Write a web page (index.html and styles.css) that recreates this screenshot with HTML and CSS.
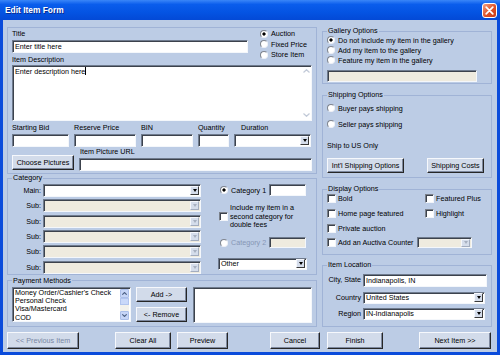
FILE: index.html
```html
<!DOCTYPE html>
<html lang="en">
<head>
    <meta charset="UTF-8">
    <title>Edit Item Form</title>
    <link rel="stylesheet" href="styles.css">
</head>
<body>
<div class="window">
    <div class="titlebar">
        <span class="caption">Edit Item Form</span>
        <span class="close-btn">
            <svg width="9" height="9" viewBox="0 0 9 9"><path d="M1.2 1.2L7.8 7.8M7.8 1.2L1.2 7.8" stroke="#fff" stroke-width="1.7" stroke-linecap="round"/></svg>
        </span>
    </div>
    <div class="client">
        <div class="columns">
            <div class="col-left">
                <div class="item-panel">
                    <div class="title-row">
                        <div class="title-field">
                            <span class="lbl">Title</span>
                            <div class="textbox">Enter title here</div>
                        </div>
                        <div class="type-group">
                            <div class="opt"><span class="radio checked"></span>Auction</div>
                            <div class="opt"><span class="radio"></span>Fixed Price</div>
                            <div class="opt"><span class="radio"></span>Store Item</div>
                        </div>
                    </div>
                    <span class="lbl">Item Description</span>
                    <div class="textarea">
                        <div class="ta-text">Enter description here<span class="caret"></span></div>
                        <div class="vscroll off">
                            <svg width="7" height="4" viewBox="0 0 7 4"><path d="M0.5 3.5L3.5 0.7L6.5 3.5" fill="none" stroke="#C2CAD8" stroke-width="1.2"/></svg>
                            <svg width="7" height="4" viewBox="0 0 7 4"><path d="M0.5 0.5L3.5 3.3L6.5 0.5" fill="none" stroke="#C2CAD8" stroke-width="1.2"/></svg>
                        </div>
                    </div>
                    <div class="price-row">
                        <div class="field f-bid"><span class="lbl">Starting Bid</span><div class="textbox"></div></div>
                        <div class="field f-reserve"><span class="lbl">Reserve Price</span><div class="textbox"></div></div>
                        <div class="field f-bin"><span class="lbl">BIN</span><div class="textbox"></div></div>
                        <div class="field f-qty"><span class="lbl">Quantity</span><div class="textbox"></div></div>
                        <div class="field f-duration"><span class="lbl">Duration</span><div class="select"><span class="val"></span><span class="arrow"></span></div></div>
                    </div>
                    <div class="picture-row">
                        <button class="btn btn-choose">Choose Pictures</button>
                        <div class="field f-url"><span class="lbl">Item Picture URL</span><div class="textbox"></div></div>
                    </div>
                </div>

                <fieldset class="group category">
                    <legend>Category</legend>
                    <div class="cat-body">
                        <div class="cat-list">
                            <div class="cat-row"><span class="cat-lbl">Main:</span><div class="select"><span class="val"></span><span class="arrow"></span></div></div>
                            <div class="cat-row"><span class="cat-lbl">Sub:</span><div class="select disabled"><span class="val"></span><span class="arrow"></span></div></div>
                            <div class="cat-row"><span class="cat-lbl">Sub:</span><div class="select disabled"><span class="val"></span><span class="arrow"></span></div></div>
                            <div class="cat-row"><span class="cat-lbl">Sub:</span><div class="select disabled"><span class="val"></span><span class="arrow"></span></div></div>
                            <div class="cat-row"><span class="cat-lbl">Sub:</span><div class="select disabled"><span class="val"></span><span class="arrow"></span></div></div>
                            <div class="cat-row"><span class="cat-lbl">Sub:</span><div class="select disabled"><span class="val"></span><span class="arrow"></span></div></div>
                        </div>
                        <div class="cat-side">
                            <div class="opt cat-opt"><span class="radio checked"></span>Category 1<div class="textbox cat-num"></div></div>
                            <div class="second-cat"><span class="check"></span><span class="second-txt">Include my item in a<br>second category for<br>double fees</span></div>
                            <div class="opt cat-opt cat2"><span class="radio"></span>Category 2<div class="textbox cat-num disabled"></div></div>
                            <div class="select other"><span class="val">Other</span><span class="arrow"></span></div>
                        </div>
                    </div>
                </fieldset>

                <fieldset class="group payment">
                    <legend>Payment Methods</legend>
                    <div class="pay-body">
                        <div class="listbox">
                            <div class="list-items">
                                <div>Money Order/Cashier's Check</div>
                                <div>Personal Check</div>
                                <div>Visa/Mastercard</div>
                                <div>COD</div>
                            </div>
                            <div class="vscroll on">
                                <span class="sb-btn"><svg width="5" height="3" viewBox="0 0 5 3"><path d="M0.3 2.7L2.5 0.5L4.7 2.7" fill="none" stroke="#4D6185" stroke-width="1.1"/></svg></span>
                                <span class="sb-thumb"></span>
                                <span class="sb-track"></span>
                                <span class="sb-btn"><svg width="5" height="3" viewBox="0 0 5 3"><path d="M0.3 0.3L2.5 2.5L4.7 0.3" fill="none" stroke="#4D6185" stroke-width="1.1"/></svg></span>
                            </div>
                        </div>
                        <div class="pay-btns">
                            <button class="btn">Add -&gt;</button>
                            <button class="btn">&lt;- Remove</button>
                        </div>
                        <div class="listbox chosen"></div>
                    </div>
                </fieldset>
            </div>

            <div class="col-right">
                <fieldset class="group gallery">
                    <legend>Gallery Options</legend>
                    <div class="opt"><span class="radio checked"></span>Do not include my item in the gallery</div>
                    <div class="opt"><span class="radio"></span>Add my item to the gallery</div>
                    <div class="opt"><span class="radio"></span>Feature my item in the gallery</div>
                    <div class="textbox disabled gallery-url"></div>
                </fieldset>

                <fieldset class="group shipping">
                    <legend>Shipping Options</legend>
                    <div class="opt"><span class="radio"></span>Buyer pays shipping</div>
                    <div class="opt seller"><span class="radio"></span>Seller pays shipping</div>
                    <div class="ship-note">Ship to US Only</div>
                    <div class="ship-btns">
                        <button class="btn btn-intl">Int'l Shipping Options</button>
                        <button class="btn btn-costs">Shipping Costs</button>
                    </div>
                </fieldset>

                <fieldset class="group display">
                    <legend>Display Options</legend>
                    <div class="display-grid">
                        <div class="opt"><span class="check"></span>Bold</div>
                        <div class="opt"><span class="check"></span>Featured Plus</div>
                        <div class="opt"><span class="check"></span>Home page featured</div>
                        <div class="opt"><span class="check"></span>Highlight</div>
                        <div class="opt"><span class="check"></span>Private auction</div>
                        <div></div>
                        <div class="opt counter"><span class="check"></span>Add an Auctiva Counter<div class="select disabled counter-select"><span class="val"></span><span class="arrow"></span></div></div>
                    </div>
                </fieldset>

                <fieldset class="group location">
                    <legend>Item Location</legend>
                    <div class="loc-grid">
                        <span class="loc-lbl">City, State</span>
                        <div class="textbox loc-city">Indianapolis, IN</div>
                        <span class="loc-lbl">Country</span>
                        <div class="select loc-sel"><span class="val">United States</span><span class="arrow"></span></div>
                        <span class="loc-lbl">Region</span>
                        <div class="select loc-sel"><span class="val">IN-Indianapolis</span><span class="arrow"></span></div>
                    </div>
                </fieldset>
            </div>
        </div>

        <div class="footer">
            <button class="btn b-prev">&lt;&lt; Previous Item</button>
            <button class="btn b-clear">Clear All</button>
            <button class="btn b-preview">Preview</button>
            <button class="btn b-cancel">Cancel</button>
            <button class="btn b-finish">Finish</button>
            <button class="btn b-next">Next Item &gt;&gt;</button>
        </div>
    </div>
</div>
</body>
</html>
```

FILE: styles.css
```css
* {
    box-sizing: border-box;
}
body {
    margin: 0;
    font-family: "Liberation Sans", Arial, sans-serif;
    font-size: 7.2px;
    color: #000;
    background: #fff;
}
.window {
    width: 500px;
    height: 355px;
    padding: 0 3px 3px;
    display: flex;
    flex-direction: column;
    background: #0A4BDB;
}
.titlebar {
    height: 20px;
    margin: 0 -3px;
    padding: 0 3px 0 5px;
    display: flex;
    align-items: center;
    justify-content: space-between;
    background: linear-gradient(#3A86F8, #0A5DEC 22%, #0454E3 60%, #0349D6);
}
.caption {
    color: #fff;
    font-weight: bold;
    font-size: 8.4px;
    text-shadow: 1px 1px 0 #0B2E92;
}
.close-btn {
    width: 15px;
    height: 15px;
    border: 1px solid #fff;
    border-radius: 3px;
    display: flex;
    align-items: center;
    justify-content: center;
    background: linear-gradient(135deg, #F3A083, #DE5127 55%, #C73C18);
}
.client {
    flex: 1;
    padding: 7px 0 0 4px;
    background: #BCCCE5;
}
.columns {
    display: flex;
    gap: 5px;
}
.col-left {
    width: 310px;
}
.col-right {
    width: 170px;
}

/* shared controls */
.lbl {
    display: block;
    height: 9px;
    line-height: 9px;
    white-space: nowrap;
}
.textbox {
    height: 13px;
    padding-left: 2px;
    line-height: 11px;
    white-space: nowrap;
    overflow: hidden;
    background: #fff;
    border: 1px solid;
    border-color: #6F7B8E #F4F7FB #F4F7FB #6F7B8E;
    box-shadow: inset 1px 1px 0 #3C424C;
}
.textbox.disabled {
    background: #EFEBDF;
}
.select {
    height: 13px;
    display: flex;
    align-items: center;
    background: #fff;
    border: 1px solid;
    border-color: #6F7B8E #F4F7FB #F4F7FB #6F7B8E;
    box-shadow: inset 1px 1px 0 #3C424C;
}
.select .val {
    flex: 1;
    padding-left: 2px;
    white-space: nowrap;
    overflow: hidden;
}
.select .arrow {
    width: 9px;
    height: 9px;
    margin-right: 1px;
    display: flex;
    align-items: center;
    justify-content: center;
    background: #D5DDEB;
    border: 1px solid;
    border-color: #F6F8FC #3A3A3A #3A3A3A #F6F8FC;
}
.select .arrow::after {
    content: "";
    border-left: 2.5px solid transparent;
    border-right: 2.5px solid transparent;
    border-top: 3px solid #000;
}
.select.disabled {
    background: #EFEBDF;
}
.select.disabled .arrow {
    border-color: #F6F8FC #A3ADBF #A3ADBF #F6F8FC;
}
.select.disabled .arrow::after {
    border-top-color: #A7B0C0;
}
.opt {
    display: flex;
    align-items: center;
    gap: 3px;
    height: 10px;
    white-space: nowrap;
}
.radio {
    flex: none;
    width: 8px;
    height: 8px;
    border-radius: 50%;
    background: #fff;
    border: 1px solid;
    border-color: #7E848E #EEF1F6 #EEF1F6 #7E848E;
}
.radio.checked {
    background: radial-gradient(circle, #000 1.3px, #fff 1.9px);
}
.check {
    flex: none;
    width: 9px;
    height: 9px;
    background: #fff;
    border: 1px solid;
    border-color: #7A808A #F2F5FA #F2F5FA #7A808A;
    box-shadow: inset 1px 1px 0 #3C424C;
}
.btn {
    height: 15px;
    padding: 0;
    font: inherit;
    color: #000;
    white-space: nowrap;
    background: #D2DBEA;
    border: 1px solid;
    border-color: #F6F8FC #262626 #262626 #F6F8FC;
    box-shadow: inset -1px -1px 0 #7D889E;
}
.vscroll {
    flex: none;
    width: 9px;
    display: flex;
    flex-direction: column;
}
.vscroll.off {
    justify-content: space-between;
    align-items: center;
    padding: 3px 0 3px;
}

/* item panel */
.item-panel {
    height: 147px;
    padding: 1px 4px 2px 4px;
    border: 1px solid #A0B3D6;
}
.title-row {
    height: 26px;
    display: flex;
    align-items: flex-start;
}
.title-field {
    width: 236px;
}
.title-field .textbox {
    margin-top: 2px;
}
.type-group {
    margin-left: 12px;
    margin-top: -0.5px;
}
.type-group .opt {
    height: 10.5px;
}
.textarea {
    height: 56px;
    margin-top: 1px;
    display: flex;
    background: #fff;
    border: 1px solid;
    border-color: #6F7B8E #F4F7FB #F4F7FB #6F7B8E;
    box-shadow: inset 1px 1px 0 #3C424C;
}
.ta-text {
    flex: 1;
    padding: 1px 2px;
    line-height: 9px;
}
.caret {
    display: inline-block;
    width: 1px;
    height: 8px;
    vertical-align: -1px;
    background: #000;
}
.price-row {
    display: flex;
    margin-top: 2px;
}
.field .textbox,
.field .select {
    margin-top: 2px;
}
.f-bid {
    width: 57px;
}
.f-reserve {
    width: 62px;
    margin-left: 5px;
}
.f-bin {
    width: 52px;
    margin-left: 5px;
}
.f-qty {
    width: 31px;
    margin-left: 5px;
}
.f-duration {
    width: 77px;
    margin-left: 5px;
}
.f-duration .lbl {
    padding-left: 7px;
}
.picture-row {
    display: flex;
    align-items: flex-start;
}
.btn-choose {
    width: 62px;
    margin-top: 8px;
}
.f-url {
    flex: 1;
    margin-left: 5px;
}
.f-url .lbl {
    padding-left: 1px;
}

/* group boxes */
.group {
    margin: 0;
    padding: 0 4px;
    min-width: 0;
    border: 1px solid #A0B3D6;
}
.group legend {
    padding: 0 1px;
    line-height: 8px;
    height: 8px;
}

/* category */
.category {
    padding-top: 2px;
}
.cat-body {
    display: flex;
}
.cat-list {
    width: 189px;
}
.cat-row {
    display: flex;
    align-items: center;
    height: 13px;
    margin-bottom: 2.35px;
}
.cat-row:last-child {
    margin-bottom: 0;
}
.cat-lbl {
    width: 29px;
    margin-right: 2px;
    text-align: right;
}
.cat-row .select {
    width: 158px;
}
.cat-side {
    width: 89px;
    margin-left: 17px;
}
.cat-opt {
    height: 12px;
    padding-left: 2px;
}
.cat-num {
    width: 37px;
    height: 12px;
    margin-left: auto;
    margin-right: 1px;
}
.second-cat {
    margin-top: 8.2px;
    display: flex;
    align-items: center;
    gap: 2px;
    padding-left: 1px;
}
.second-txt {
    line-height: 8.5px;
    white-space: nowrap;
}
.cat2 {
    margin-top: 7.3px;
    color: #8696B5;
}
.cat2 .cat-num {
    height: 11px;
}
.other {
    margin-top: 8.7px;
    height: 12px;
}

/* payment */
.payment {
    margin-top: 2px;
    padding-top: 2px;
    padding-bottom: 3px;
}
.pay-body {
    display: flex;
    align-items: flex-start;
}
.listbox {
    width: 119px;
    height: 35px;
    display: flex;
    padding: 1px 1px 0 2px;
    background: #fff;
    border: 1px solid;
    border-color: #6F7B8E #F4F7FB #F4F7FB #6F7B8E;
    box-shadow: inset 1px 1px 0 #3C424C;
}
.list-items {
    flex: 1;
    padding-top: 0.5px;
    line-height: 8.1px;
    white-space: nowrap;
}
.vscroll.on {
    margin-bottom: 1px;
    background: #F2F1EC;
}
.sb-btn {
    height: 9px;
    display: flex;
    align-items: center;
    justify-content: center;
    background: #C6D5F7;
    border: 1px solid #ABBFEA;
    border-radius: 1px;
}
.sb-thumb {
    height: 7px;
    background: #C9D8F9;
    border: 1px solid #B1C4EE;
}
.sb-track {
    flex: 1;
}
.pay-btns {
    width: 52px;
    margin-left: 5px;
    display: flex;
    flex-direction: column;
    gap: 5px;
}
.chosen {
    height: 36px;
    margin-left: 6px;
}

/* right column */
.gallery {
    padding-bottom: 1px;
}
.gallery .opt {
    height: 10px;
}
.gallery-url {
    width: 150px;
    height: 12px;
    margin-top: 5px;
}
.shipping {
    margin-top: 7px;
    padding-top: 4px;
    padding-bottom: 4px;
}
.seller {
    margin-top: 6px;
}
.ship-note {
    margin-top: 12px;
    height: 9px;
    line-height: 9px;
}
.ship-btns {
    margin-top: 8px;
    display: flex;
    justify-content: space-between;
    padding-right: 3px;
}
.btn-intl {
    width: 77px;
}
.btn-costs {
    width: 57px;
}
.display {
    margin-top: 7px;
    padding-bottom: 4px;
}
.display-grid {
    margin-top: -1.5px;
    display: grid;
    grid-template-columns: 98px 1fr;
}
.display-grid .opt {
    height: 14.7px;
    gap: 2px;
}
.counter {
    grid-column: span 2;
}
.counter-select {
    width: 55px;
    height: 11px;
    margin-left: auto;
    margin-right: 15px;
}
.counter-select .arrow {
    height: 8px;
}
.location {
    margin-top: 6px;
    padding-top: 4.7px;
    padding-bottom: 6px;
}
.loc-grid {
    display: grid;
    grid-template-columns: 34px 124px;
    column-gap: 2px;
    align-items: center;
}
.loc-lbl {
    text-align: right;
    white-space: nowrap;
    margin-top: -1px;
}
.loc-city {
    height: 13px;
}
.loc-sel {
    width: 122px;
    height: 12px;
    margin-top: 5px;
}
.loc-sel + .loc-lbl + .loc-sel {
    margin-top: 4px;
}
.loc-grid .loc-lbl:nth-of-type(2) {
    margin-top: 4px;
}
.loc-grid .loc-lbl:nth-of-type(3) {
    margin-top: 3px;
}

/* footer */
.footer {
    margin-top: 5px;
    display: flex;
}
.footer .btn {
    height: 17px;
}
.b-prev {
    width: 72px;
    margin-left: 0;
    color: #7886A3;
}
.b-clear {
    width: 56px;
    margin-left: 36px;
}
.b-preview {
    width: 51px;
    margin-left: 6px;
}
.b-cancel {
    width: 50px;
    margin-left: 42px;
}
.b-finish {
    width: 56px;
    margin-left: 7px;
}
.b-next {
    width: 72px;
    margin-left: 36px;
}
```
